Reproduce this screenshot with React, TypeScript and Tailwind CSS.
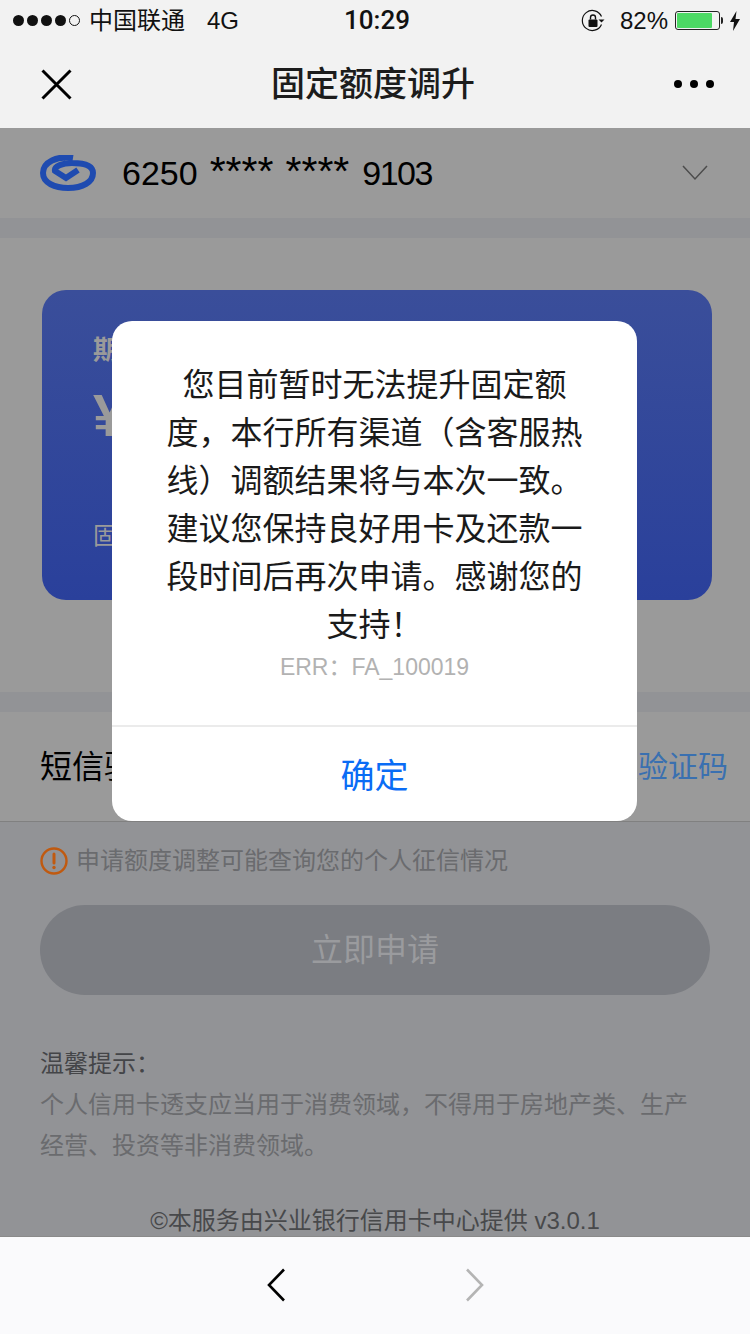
const sans = "font-['Liberation_Sans','Noto_Sans_CJK_SC',sans-serif]";

function StatusBar() {
  return (
    <div className="relative flex h-10 items-center justify-between pl-[13px] pr-[9px] pt-[1px] text-[24px] text-[#111]">
      <div className="flex items-center">
        <div className="flex items-center gap-[3px]">
          {[0, 1, 2, 3].map((i) => (
            <span key={i} className="size-[11px] rounded-full bg-[#111]" />
          ))}
          <span className="size-[11px] rounded-full border border-[#111]" />
        </div>
        <span className="ml-[9px] leading-none">中国联通</span>
        <span className="ml-[22px] leading-none">4G</span>
      </div>
      <span className="absolute left-[344px] top-[6px] font-['Roboto',sans-serif] text-[26px] font-medium leading-7">10:29</span>
      <div className="flex items-center">
        <svg width="24" height="24" viewBox="0 0 24 24" fill="none" className="mr-[15px]">
          <path d="M20.5 15.5A10 10 0 1 1 20.5 7.5" stroke="#111" strokeWidth="1.2" />
          <path d="M17.5 10.5h6l-3 3z" fill="#111" />
          <rect x="7.5" y="10.5" width="9" height="7.5" rx="1" fill="#111" />
          <path d="M9.5 10.5V8.5a2.5 2.5 0 0 1 5 0v2" stroke="#111" strokeWidth="1.4" />
        </svg>
        <span className="mr-[7px] leading-none">82%</span>
        <div className="flex h-[19px] w-[45px] items-center rounded-[3px] border border-[#222] p-[1px]">
          <div className="h-full w-[35px] rounded-[1px] bg-[#4cd964]" />
        </div>
        <span className="ml-[1px] h-[7px] w-[2px] rounded-r-full bg-[#222]" />
        <svg width="12" height="20" viewBox="0 0 12 20" className="ml-[6px]">
          <path d="M7.5 0 1 11h4l-1 9 7-12H6.5z" fill="#111" />
        </svg>
      </div>
    </div>
  );
}

function NavBar() {
  return (
    <div className="flex h-[88px] items-center justify-between pl-[41px] pr-[36px]">
      <svg width="31" height="31" viewBox="0 0 31 31" fill="none">
        <path d="M1.5 1.5l28 28M29.5 1.5l-28 28" stroke="#000" strokeWidth="3" />
      </svg>
      <h1 className="text-[34px] leading-none font-medium text-[#1c1c1c]">固定额度调升</h1>
      <div className="flex items-center gap-[8px]">
        <span className="size-[8px] rounded-full bg-black" />
        <span className="size-[8px] rounded-full bg-black" />
        <span className="size-[8px] rounded-full bg-black" />
      </div>
    </div>
  );
}

function CardLogo() {
  return (
    <svg width="56" height="36" viewBox="0 0 56 36" fill="none">
      <path
        d="M33 3C17 .5 3 7 3 18c0 10 12 15 25 15 15 0 25-6 25-15 0-8-11-10-21-10-10 0-18 3.500-17 8l11 7 12-8"
        stroke="#1f4bb0"
        strokeWidth="6"
      />
    </svg>
  );
}

function Modal() {
  return (
    <div className="absolute left-[112px] top-[321px] flex h-[500px] w-[525px] flex-col rounded-[20px] bg-white">
      <div className="h-[404px] px-[54px] pt-[40px] text-center">
        <p className="text-[32px] leading-[48px] text-[#1a1a1a]">
          您目前暂时无法提升固定额度，本行所有渠道（含客服热线）调额结果将与本次一致。建议您保持良好用卡及还款一段时间后再次申请。感谢您的支持！
        </p>
        <p className="text-[23px] leading-[36px] text-[#b2b2b2]">ERR：FA_100019</p>
      </div>
      <div className="flex flex-1 items-center justify-center border-t-2 border-[#ebebeb] pt-[4px] text-[34px] text-[#0a6cf5]">
        确定
      </div>
    </div>
  );
}

export default function App() {
  return (
    <div className={`relative flex h-[1334px] w-[750px] flex-col overflow-hidden bg-[#f2f2f2] ${sans}`}>
      <StatusBar />
      <NavBar />

      <main className="h-[1108px] overflow-hidden bg-[#929396]">
        <div className="flex h-[90px] items-center bg-[#9a9a9a] pl-[40px] pr-[42px]">
          <CardLogo />
          <div className="ml-[26px] flex flex-1 items-baseline gap-[12px] pb-[4px] text-[34px] leading-none text-black">
            <span>6250</span>
            <span className="text-[41px] leading-none">****</span>
            <span className="text-[41px] leading-none">****</span>
            <span className="ml-[1px] tracking-[-1.500px]">9103</span>
          </div>
          <svg width="26" height="16" viewBox="0 0 26 16" fill="none">
            <path d="M1 1l12 13L25 1" stroke="#4c4c4c" strokeWidth="1.5" />
          </svg>
        </div>

        <div className="mt-[20px] h-[454px] bg-[#9a9a9a] pl-[42px] pr-[38px] pt-[52px]">
          <div className="h-[310px] rounded-[24px] bg-gradient-to-b from-[#3a4e9a] to-[#2a409b] pl-[51px] pt-[42px] text-[#9a9a9a]">
            <p className="text-[26px] leading-9 font-bold">期</p>
            <p className="mt-[10px] text-[60px] leading-[76px] font-bold">¥</p>
            <p className="mt-[64px] text-[24px] leading-9">固</p>
          </div>
        </div>

        <div className="mt-[20px] flex h-[110px] items-center justify-between border-b border-[#808080] bg-[#9a9a9a] pl-[40px] pr-[22px]">
          <span className="text-[32px] text-black">短信验证码</span>
          <span className="text-[30px] text-[#3a70b0]">获取验证码</span>
        </div>

        <div className="flex h-[76px] items-center pl-[40px] pt-[1px]">
          <svg width="28" height="28" viewBox="0 0 28 28" fill="none">
            <circle cx="14" cy="14" r="12.5" stroke="#c05a10" strokeWidth="2.4" />
            <path d="M14 7v9" stroke="#c05a10" strokeWidth="3" strokeLinecap="round" />
            <circle cx="14" cy="20.5" r="1.7" fill="#c05a10" />
          </svg>
          <span className="ml-[8px] text-[24px] leading-none text-[#6a6b6e]">申请额度调整可能查询您的个人征信情况</span>
        </div>

        <div className="mx-[40px] mt-[7px] flex h-[90px] items-center justify-center rounded-full bg-[#7b7d82] text-[32px] text-[#9a9b9e]">
          立即申请
        </div>

        <div className="px-[40px] pt-[48px] text-[24px] leading-[41px]">
          <p className="text-[#444548]">温馨提示：</p>
          <p className="text-[#6a6b6e]">个人信用卡透支应当用于消费领域，不得用于房地产类、生产经营、投资等非消费领域。</p>
        </div>

        <p className="mt-[37px] text-center text-[24px] leading-9 text-[#48494b]">©本服务由兴业银行信用卡中心提供 v3.0.1</p>
      </main>

      <div className="flex h-[98px] items-center justify-center gap-[179px] border-t border-[#8a8a8a] bg-[#fafafc] pb-[2px]">
        <svg width="20" height="34" viewBox="0 0 20 34" fill="none">
          <path d="M18 1.500 3 17l15 15.500" stroke="#000" strokeWidth="2.6" />
        </svg>
        <svg width="20" height="34" viewBox="0 0 20 34" fill="none">
          <path d="M2 1.500 17 17 2 32.500" stroke="#b4b4b4" strokeWidth="2.6" />
        </svg>
      </div>

      <Modal />
    </div>
  );
}
